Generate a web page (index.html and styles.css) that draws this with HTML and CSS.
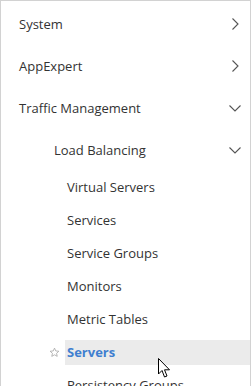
FILE: index.html
```html
<!DOCTYPE html>
<html lang="en">
<head>
  <meta charset="UTF-8" />
  <title>Navigation</title>
  <link rel="stylesheet" href="styles.css">
</head>
<body>
  <nav class="nav">
    <div class="nav-item">
      <span>System</span>
      <svg class="chev" width="12" height="12" viewBox="0 0 12 12"><path d="M3.5 0.5 L9 6 L3.5 11.5" /></svg>
    </div>
    <div class="nav-item">
      <span>AppExpert</span>
      <svg class="chev" width="12" height="12" viewBox="0 0 12 12"><path d="M3.5 0.5 L9 6 L3.5 11.5" /></svg>
    </div>
    <div class="nav-item">
      <span>Traffic Management</span>
      <svg class="chev" width="12" height="12" viewBox="0 0 12 12"><path d="M0.5 3.5 L6 9 L11.5 3.5" /></svg>
    </div>
    <div class="nav-item level-2">
      <span>Load Balancing</span>
      <svg class="chev" width="12" height="12" viewBox="0 0 12 12"><path d="M0.5 3.5 L6 9 L11.5 3.5" /></svg>
    </div>
    <ul class="sub">
      <li><span class="link">Virtual Servers</span></li>
      <li><span class="link">Services</span></li>
      <li><span class="link">Service Groups</span></li>
      <li><span class="link">Monitors</span></li>
      <li><span class="link">Metric Tables</span></li>
      <li class="active">
        <svg class="star" width="11" height="11" viewBox="0 0 24 24"><path d="M12 2.5 L14.8 8.6 L21.5 9.3 L16.5 13.8 L17.9 20.4 L12 17 L6.1 20.4 L7.5 13.8 L2.5 9.3 L9.2 8.6 Z" /></svg>
        <span class="link">Servers</span>
        <svg class="cursor" width="13" height="21" viewBox="0 0 13 21"><path d="M0.5 0.5 L0.5 16 L4 12.5 L6.5 19 L9 18 L6.5 11.8 L11.5 11.8 Z" /></svg>
      </li>
      <li><span class="link">Persistency Groups</span></li>
    </ul>
  </nav>
</body>
</html>
```

FILE: styles.css
```css
body {
  margin: 0;
  font-family: "Open Sans", "Noto Sans", sans-serif;
  font-size: 13px;
  color: #333;
  background: #fff;
  overflow: hidden;
}

.nav {
  height: 386px;
  box-sizing: border-box;
  border: 1px solid #d2d2d2;
  border-bottom: none;
  padding-top: 2px;
}

.nav-item {
  height: 42px;
  display: flex;
  align-items: center;
  justify-content: space-between;
  padding: 0 9px 0 18px;
}

.nav-item.level-2 {
  padding-left: 53px;
}

.chev {
  fill: none;
  stroke: #555;
  stroke-width: 1.1;
}

.sub {
  list-style: none;
  margin: 0;
  padding: 0;
}

.sub li {
  height: 33px;
  display: flex;
  align-items: center;
  position: relative;
  padding-left: 64px;
}

.sub .link {
  flex: 1;
  height: 25px;
  line-height: 25px;
  padding-left: 2px;
}

.sub li.active .link {
  background: #ebebeb;
  color: #3f7fd0;
  font-weight: bold;
}

.star {
  position: absolute;
  left: 48px;
  top: 11px;
  fill: none;
  stroke: #a8a8a8;
  stroke-width: 1.8;
}

.cursor {
  position: absolute;
  left: 157px;
  top: 22px;
  fill: #fff;
  stroke: #000;
  stroke-width: 1;
}
```
